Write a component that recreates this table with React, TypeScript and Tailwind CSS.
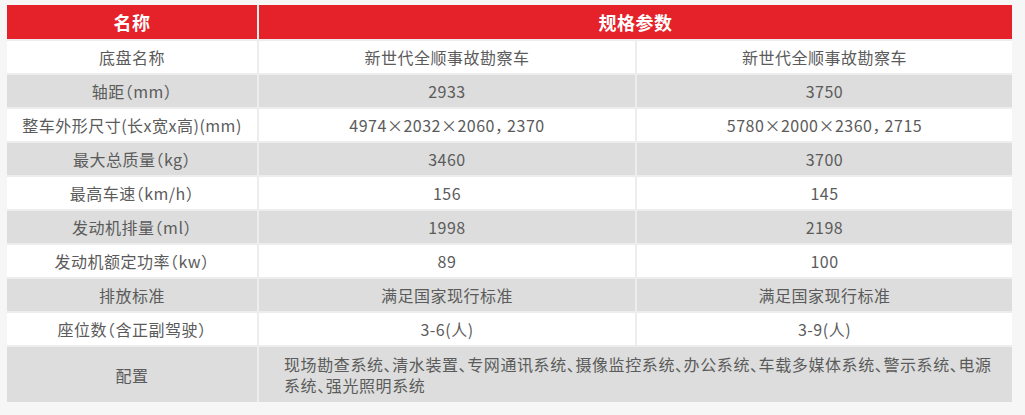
const rows = [
  { name: "底盘名称", a: "新世代全顺事故勘察车", b: "新世代全顺事故勘察车" },
  { name: "轴距（mm）", a: "2933", b: "3750" },
  { name: "整车外形尺寸(长x宽x高)(mm)", a: "4974×2032×2060，\u20092370", b: "5780×2000×2360，\u20092715" },
  { name: "最大总质量（kg）", a: "3460", b: "3700" },
  { name: "最高车速（km/h）", a: "156", b: "145" },
  { name: "发动机排量（ml）", a: "1998", b: "2198" },
  { name: "发动机额定功率（kw）", a: "89", b: "100" },
  { name: "排放标准", a: "满足国家现行标准", b: "满足国家现行标准" },
  { name: "座位数（含正副驾驶）", a: "3-6(人)", b: "3-9(人)" },
];

export default function App() {
  return (
    <div className="min-h-[415px] w-full bg-[#f6f6f6] pt-[5px] pl-[7px] font-['Noto_Sans_CJK_SC',sans-serif] [font-feature-settings:'halt']">
      <div className="grid w-[1005px] grid-cols-[250px_376px_375px] gap-[2px] bg-[#ededed] text-[16px] tracking-[0.5px] text-[#5b5b5b]">
        {/* header */}
        <div className="flex h-[34px] items-center justify-center bg-[#e52129] text-[18px] font-bold text-white">名称</div>
        <div className="col-span-2 flex h-[34px] items-center justify-center bg-[#e52129] text-[18px] font-bold text-white">规格参数</div>

        {rows.map((r, i) => {
          const bg = i % 2 === 1 ? "bg-[#dcdddc]" : "bg-white";
          return [
            <div key={`n${i}`} className={`flex h-[32px] items-center justify-center ${bg}`}>{r.name}</div>,
            <div key={`a${i}`} className={`flex h-[32px] items-center justify-center ${bg}`}>{r.a}</div>,
            <div key={`b${i}`} className={`flex h-[32px] items-center justify-center ${bg}`}>{r.b}</div>,
          ];
        })}

        <div className="flex h-[55px] items-center justify-center bg-[#dcdddc]">配置</div>
        <div className="col-span-2 flex h-[55px] items-center bg-[#dcdddc] pl-[25px]">
          <p className="w-[716px] leading-[21px] tracking-[0.6px]">
            现场勘查系统、清水装置、专网通讯系统、摄像监控系统、办公系统、车载多媒体系统、警示系统、电源系统、强光照明系统
          </p>
        </div>
      </div>
    </div>
  );
}
